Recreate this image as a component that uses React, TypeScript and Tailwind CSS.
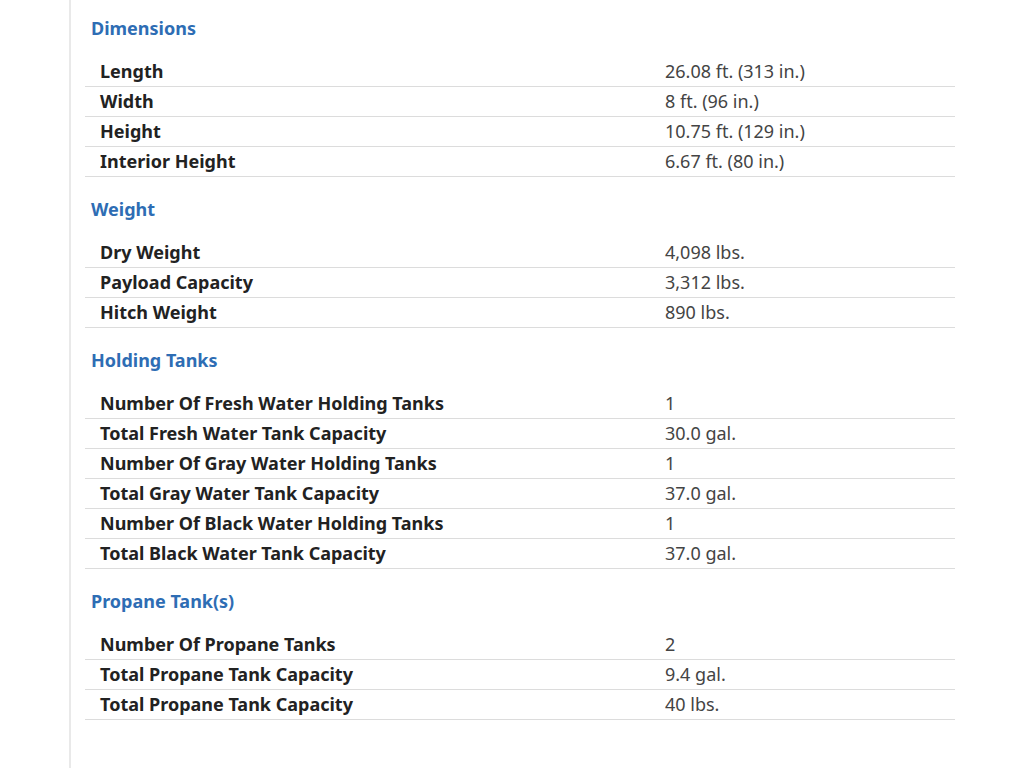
const sections: { title: string; rows: [string, string][] }[] = [
  {
    title: 'Dimensions',
    rows: [
      ['Length', '26.08 ft. (313 in.)'],
      ['Width', '8 ft. (96 in.)'],
      ['Height', '10.75 ft. (129 in.)'],
      ['Interior Height', '6.67 ft. (80 in.)'],
    ],
  },
  {
    title: 'Weight',
    rows: [
      ['Dry Weight', '4,098 lbs.'],
      ['Payload Capacity', '3,312 lbs.'],
      ['Hitch Weight', '890 lbs.'],
    ],
  },
  {
    title: 'Holding Tanks',
    rows: [
      ['Number Of Fresh Water Holding Tanks', '1'],
      ['Total Fresh Water Tank Capacity', '30.0 gal.'],
      ['Number Of Gray Water Holding Tanks', '1'],
      ['Total Gray Water Tank Capacity', '37.0 gal.'],
      ['Number Of Black Water Holding Tanks', '1'],
      ['Total Black Water Tank Capacity', '37.0 gal.'],
    ],
  },
  {
    title: 'Propane Tank(s)',
    rows: [
      ['Number Of Propane Tanks', '2'],
      ['Total Propane Tank Capacity', '9.4 gal.'],
      ['Total Propane Tank Capacity', '40 lbs.'],
    ],
  },
];

export default function App() {
  return (
    <div className="min-h-[768px] bg-white" style={{ fontFamily: '"Noto Sans", "Open Sans", sans-serif' }}>
      <div className="ml-[69px] min-h-[768px] border-l-2 border-[#e9e9e9] pl-[14px] pt-4">
        <div className="w-[870px]">
          {sections.map((section) => (
            <section key={section.title} className="mb-5">
              <h3 className="mb-[17px] pl-[6px] text-[18px] leading-[24px] font-bold text-[#2e6db4]">
                {section.title}
              </h3>
              <div>
                {section.rows.map(([label, value], i) => (
                  <div key={i} className="flex h-[30px] border-b border-[#dcdcdc]">
                    <div className="w-[565px] pl-[15px] text-[18px] leading-[29px] font-bold text-[#222]">
                      {label}
                    </div>
                    <div className="pl-[15px] text-[18px] leading-[29px] text-[#444]">{value}</div>
                  </div>
                ))}
              </div>
            </section>
          ))}
        </div>
      </div>
    </div>
  );
}
